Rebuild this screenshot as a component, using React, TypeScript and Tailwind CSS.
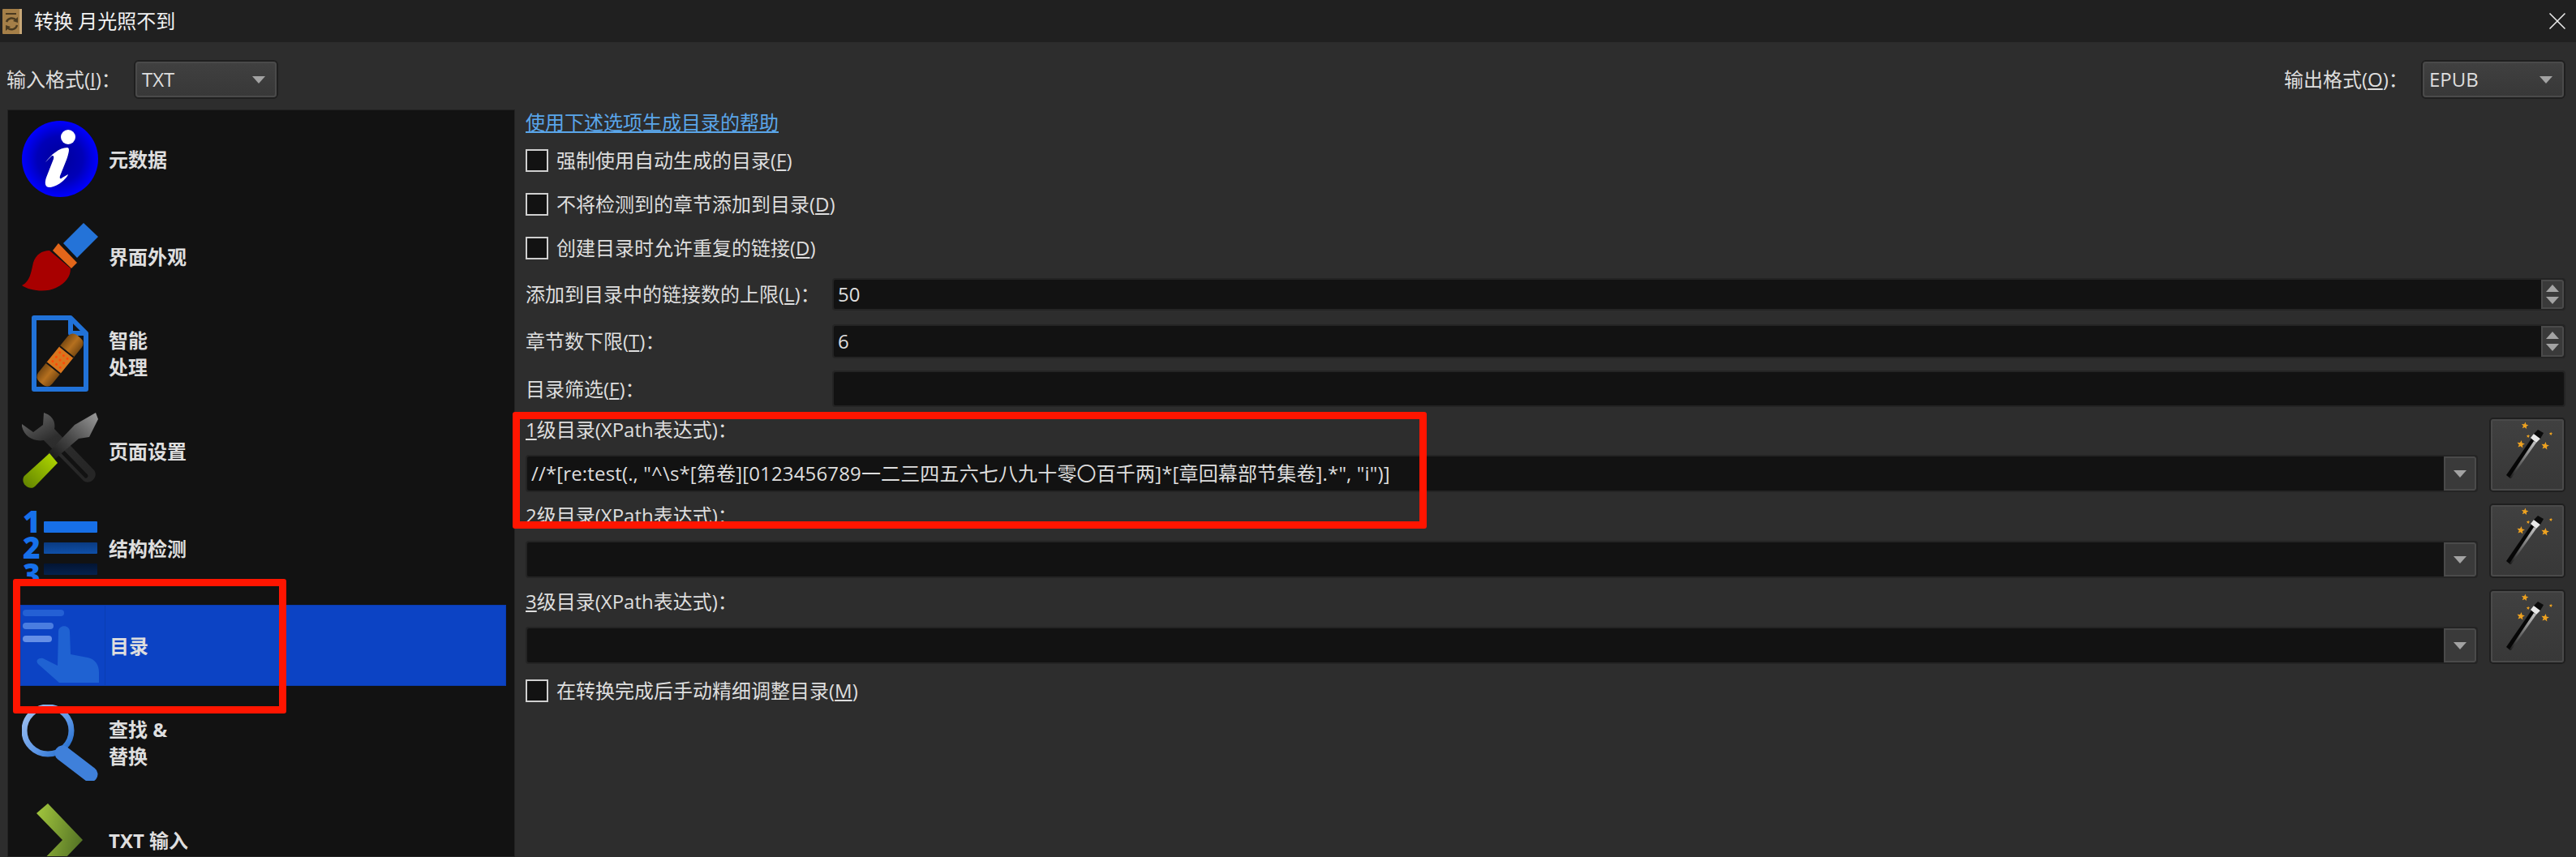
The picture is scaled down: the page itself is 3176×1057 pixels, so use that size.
import React from 'react';

const Arrow = ({ up = false }: { up?: boolean }) => (
  <svg width="16" height="9" viewBox="0 0 16 9">
    <polygon points={up ? '8,0 16,9 0,9' : '0,0 16,0 8,9'} fill="#a3a3a3" />
  </svg>
);

const Combo = ({ text, className }: { text: string; className: string }) => (
  <div className={`rounded-[6px] border-2 border-[#1f1f1f] ${className}`}>
    <div className="flex h-full items-center justify-between rounded-[4px] border-2 border-[#4a4a4a] bg-gradient-to-b from-[#404040] to-[#383838] pl-[6px] pr-[12px]">
      <span>{text}</span>
      <Arrow />
    </div>
  </div>
);

const Check = ({ children, className = '' }: { children: React.ReactNode; className?: string }) => (
  <div className={`flex h-[28px] items-center gap-[10px] ${className}`}>
    <div className="h-[28px] w-[28px] border-2 border-[#cfcfcf] bg-[#121212]" />
    <span>{children}</span>
  </div>
);

const SpinRow = ({ label, value, spin = false, className }: { label: React.ReactNode; value?: string; spin?: boolean; className: string }) => (
  <div className={`flex items-center ${className}`}>
    <div className="w-[378px]">{label}</div>
    <div className="flex h-full flex-1 rounded-[4px] border-2 border-[#242424] bg-[#121212]">
      <div className="flex flex-1 items-center pl-[5px]">{value}</div>
      {spin && (
        <div className="flex w-[28px] flex-col items-center justify-center gap-[6px] rounded-r-[3px] border-2 border-[#4a4a4a] bg-[#3a3a3a]">
          <Arrow up />
          <Arrow />
        </div>
      )}
    </div>
  </div>
);

const star = (cx: number, cy: number, r: number) =>
  Array.from({ length: 10 }, (_, i) => {
    const a = (Math.PI / 5) * i - Math.PI / 2 + 0.15;
    const d = i % 2 ? r * 0.45 : r;
    return `${(cx + d * Math.cos(a)).toFixed(1)},${(cy + d * Math.sin(a)).toFixed(1)}`;
  }).join(' ');

const Wand = () => (
  <svg width="86" height="84" viewBox="13 9 86 84">
    <defs>
      <linearGradient id="wandShine" x1="0" y1="1" x2="1" y2="0">
        <stop offset="0" stopColor="#1a1a1a" />
        <stop offset="0.45" stopColor="#6a6a6a" />
        <stop offset="1" stopColor="#c8c8c8" />
      </linearGradient>
    </defs>
    {[[53, 15, 4.5], [57, 28, 2.2], [85, 25, 2.2], [48, 38, 5], [78, 40, 5]].map(([x, y, r]) => (
      <polygon key={`${x}-${y}`} points={star(x, y, r)} fill="#eea220" />
    ))}
    <polygon points="30,76 35,80 66,35 61,31" fill="#060606" />
    <polygon points="34,79 36,80 67,36 64,34" fill="url(#wandShine)" />
    <polygon points="64,25 72,31 67,36 60,30" fill="#e8e8e8" />
    <polygon points="69,20 76,24 72,31 64,25" fill="#0a0a0a" />
  </svg>
);

const LevelRow = ({ n, value, className = '' }: { n: string; value?: string; className?: string }) => (
  <div className={`flex h-[92px] gap-[14px] ${className}`}>
    <div className="flex flex-1 flex-col justify-between">
      <div className="h-[30px] leading-[30px]">
        <span className="underline">{n}</span>级目录(XPath表达式)：
      </div>
      <div className="flex h-[46px] rounded-[4px] border-2 border-[#242424] bg-[#121212]">
        <div className="flex flex-1 items-center whitespace-pre pl-[5px] tracking-[0.15px]">{value}</div>
        <div className="flex w-[40px] items-center justify-center rounded-r-[3px] border-2 border-[#4a4a4a] bg-[#3a3a3a]">
          <Arrow />
        </div>
      </div>
    </div>
    <div className="h-[92px] w-[94px] rounded-[5px] border-2 border-[#1f1f1f]">
      <div className="flex h-full items-center justify-center rounded-[3px] border-2 border-[#4a4a4a] bg-gradient-to-b from-[#404040] to-[#383838]">
        <Wand />
      </div>
    </div>
  </div>
);

const InfoIcon = () => (
  <svg width="94" height="94" viewBox="0 0 94 94">
    <defs>
      <radialGradient id="infoBg">
        <stop offset="0" stopColor="#00009a" />
        <stop offset="0.6" stopColor="#0000b8" />
        <stop offset="1" stopColor="#0000ff" />
      </radialGradient>
    </defs>
    <circle cx="47" cy="47" r="47" fill="url(#infoBg)" />
    <circle cx="57" cy="20" r="9" fill="#fff" />
    <path d="M29 51 C36 42 46 33 56 33 C60 33 57 42 55 48 L47 68 C46 72 48 72 50 70 L57 66 C55 72 43 82 34 82 C28 82 28 76 30 70 L39 47 C40 43 38 42 36 44 Z" fill="#fff" />
  </svg>
);

const BrushIcon = () => (
  <svg width="94" height="94" viewBox="0 0 94 94">
    <polygon points="76,6 94,23 68,49 51,31" fill="#2473d8" />
    <polygon points="45,31 68,55 61,62 38,40" fill="#e2661a" />
    <path d="M34 40 C25 40 17 45 14 55 C11 68 10 78 0 83 C10 90 30 92 42 86 C54 80 60 72 60 62 Z" fill="#a80000" />
  </svg>
);

const DocIcon = () => (
  <svg width="94" height="94" viewBox="0 0 94 94">
    <defs>
      <linearGradient id="bandEnd" x1="0" y1="0" x2="0" y2="1">
        <stop offset="0" stopColor="#7a4a12" />
        <stop offset="0.5" stopColor="#b5701f" />
        <stop offset="1" stopColor="#7a4a12" />
      </linearGradient>
    </defs>
    <path d="M15 3 H60 L79 22 V91 H15 Z" fill="none" stroke="#2172d8" strokeWidth="6" strokeLinejoin="round" />
    <path d="M60 3 V22 H79" fill="none" stroke="#2172d8" strokeWidth="6" strokeLinejoin="round" />
    <g transform="rotate(-51 47 55)">
      <rect x="10" y="44" width="74" height="22" rx="8" fill="url(#bandEnd)" />
      <rect x="34" y="44" width="26" height="22" fill="#d9761e" />
      <line x1="34" y1="44" x2="34" y2="66" stroke="#111" strokeWidth="2" />
      <line x1="60" y1="44" x2="60" y2="66" stroke="#111" strokeWidth="2" />
      {[40, 47, 54].flatMap((x) => [49, 55, 61].map((y) => <circle key={`${x}-${y}`} cx={x} cy={y} r="1.5" fill="#ff4a08" />))}
    </g>
  </svg>
);

const ToolsIcon = () => (
  <svg width="94" height="94" viewBox="0 0 94 94">
    <defs>
      <linearGradient id="steel" x1="0" y1="0" x2="0.6" y2="1">
        <stop offset="0" stopColor="#6e6e6e" />
        <stop offset="0.45" stopColor="#2e2e2e" />
        <stop offset="1" stopColor="#262626" />
      </linearGradient>
      <linearGradient id="blade" x1="1" y1="0" x2="0" y2="1">
        <stop offset="0" stopColor="#9c9c9c" />
        <stop offset="0.5" stopColor="#4a4a4a" />
        <stop offset="1" stopColor="#0a0a0a" />
      </linearGradient>
      <linearGradient id="lime" x1="1" y1="0" x2="0" y2="1">
        <stop offset="0" stopColor="#b4dc00" />
        <stop offset="1" stopColor="#5f8000" />
      </linearGradient>
    </defs>
    <path d="M27 0 C37 3 42 11 40 20 L89 71 C95 79 84 90 76 84 L27 34 C15 36 3 30 0 17 L0 14 L14 24 L26 15 Z" fill="url(#steel)" />
    <path d="M48 46 L79 78" stroke="#121212" strokeWidth="5" strokeLinecap="round" />
    <polygon points="65,15 91,0 94,8 83,30 70,32 35,62 28,54" fill="url(#blade)" />
    <path d="M34 50 L44 62 L16 91 C9 97 -3 87 3 78 Z" fill="url(#lime)" />
  </svg>
);

const StructIcon = () => (
  <svg width="94" height="94" viewBox="0 0 94 94" fontFamily="'Open Sans', sans-serif" fontWeight="800" fontSize="37" fill="#1670ea">
    <defs>
      <linearGradient id="bar2" x1="0" y1="0" x2="0" y2="1">
        <stop offset="0" stopColor="#0a3a80" />
        <stop offset="1" stopColor="#0f4fa8" />
      </linearGradient>
      <linearGradient id="bar3" x1="0" y1="0" x2="0" y2="1">
        <stop offset="0" stopColor="#031432" />
        <stop offset="1" stopColor="#05224e" />
      </linearGradient>
    </defs>
    <text x="1" y="28">1</text>
    <text x="1" y="60">2</text>
    <text x="1" y="93">3</text>
    <rect x="27" y="14" width="66" height="14" rx="1" fill="#176fe6" />
    <rect x="27" y="40" width="66" height="14" rx="1" fill="url(#bar2)" />
    <rect x="27" y="66" width="66" height="14" rx="1" fill="url(#bar3)" />
  </svg>
);

const HandIcon = () => (
  <svg width="94" height="91" viewBox="0 0 94 91">
    <rect x="0" y="1" width="51" height="8" rx="4" fill="#2460d4" />
    <rect x="0" y="17" width="38" height="8" rx="4" fill="#4a7de0" />
    <rect x="0" y="33" width="36" height="8" rx="4" fill="#658fe6" />
    <path d="M44 28 C44 19 58 19 58 28 L59 56 L80 60 C90 62 94 70 94 78 V91 H45 L19 68 C15 63 20 60 25 61 L43 70 Z" fill="#1f62d2" />
  </svg>
);

const SearchIcon = () => (
  <svg width="94" height="94" viewBox="0 0 94 94">
    <defs>
      <linearGradient id="lens" x1="0" y1="0" x2="1" y2="1">
        <stop offset="0" stopColor="#a4c4f2" />
        <stop offset="0.6" stopColor="#5c96e6" />
        <stop offset="1" stopColor="#1a66c8" />
      </linearGradient>
    </defs>
    <circle cx="32" cy="32" r="29" fill="none" stroke="url(#lens)" strokeWidth="7" />
    <path d="M50 60 L84 86" stroke="#3f80da" strokeWidth="19" strokeLinecap="round" />
  </svg>
);

const ChevronIcon = () => (
  <svg width="94" height="94" viewBox="0 0 94 94">
    <defs>
      <linearGradient id="chev" x1="0" y1="0" x2="1" y2="0.4">
        <stop offset="0" stopColor="#a4c83e" />
        <stop offset="1" stopColor="#577626" />
      </linearGradient>
    </defs>
    <path d="M32 2 L75 47 L32 92 L18 80 L50 47 L18 14 Z" fill="url(#chev)" />
  </svg>
);

const NAV = [
  { label: ['元数据'], icon: <InfoIcon /> },
  { label: ['界面外观'], icon: <BrushIcon /> },
  { label: ['智能', '处理'], icon: <DocIcon /> },
  { label: ['页面设置'], icon: <ToolsIcon /> },
  { label: ['结构检测'], icon: <StructIcon /> },
  { label: ['目录'], icon: <HandIcon />, active: true },
  { label: ['查找 &', '替换'], icon: <SearchIcon /> },
  { label: ['TXT 输入'], icon: <ChevronIcon /> },
];

export default function App() {
  return (
    <div className="relative flex h-[1057px] w-[3176px] flex-col overflow-hidden bg-[#2d2d2d] font-['Open_Sans','Noto_Sans_CJK_SC',sans-serif] text-[24px] text-[#dedede]">
      <div className="flex h-[52px] items-center bg-[#202020]">
        <svg className="ml-[3px]" width="24" height="31" viewBox="0 0 24 31">
          <rect width="24" height="31" rx="1" fill="#a57f48" />
          <rect x="21" width="3" height="31" fill="#c8a878" />
          <rect x="4" y="5" width="13" height="2" fill="#4a3a20" />
          <path d="M5 16 A7 7 0 0 1 17 14 M18 20 A7 7 0 0 1 6 23" fill="none" stroke="#4a3a20" strokeWidth="2.5" />
          <polygon points="19,10 19,17 13,15" fill="#4a3a20" />
          <polygon points="4,27 4,20 10,22" fill="#4a3a20" />
        </svg>
        <span className="ml-[15px] flex-1 text-[#f2f2f2]">转换 月光照不到</span>
        <svg className="mr-[13px]" width="20" height="20" viewBox="0 0 20 20">
          <path d="M0.5 0.5 L19.5 19.5 M19.5 0.5 L0.5 19.5" stroke="#eee" strokeWidth="1.5" />
        </svg>
      </div>

      <div className="flex h-[83px] items-start justify-between pl-[8px] pr-[13px] pt-[22px]">
        <div className="flex items-center">
          <span className="w-[157px]">
            输入格式(<span className="underline">I</span>)：
          </span>
          <Combo text="TXT" className="h-[48px] w-[178px]" />
        </div>
        <div className="flex items-center">
          <span className="w-[169px]">
            输出格式(<span className="underline">O</span>)：
          </span>
          <Combo text="EPUB" className="h-[48px] w-[178px]" />
        </div>
      </div>

      <div className="flex min-h-0 flex-1 pl-[9px] pr-[13px]">
        <div className="w-[626px] shrink-0 overflow-hidden border border-[#232323] bg-[#121212] pb-0">
          {NAV.map((item) => (
            <div key={item.label[0]} className="flex h-[120px] py-[10px] pl-[15px] pr-[10px]">
              <div className={`flex h-[100px] flex-1 items-center font-bold ${item.active ? 'border border-[#0a3db2] bg-[#0c43c4]' : ''}`}>
                <div className={`flex h-full w-[104px] items-center pl-[2px] ${item.active ? 'border-r border-[#0a3db2]' : ''}`}>{item.icon}</div>
                <div className="ml-[5px] leading-[33px]">
                  {item.label.map((line) => (
                    <div key={line}>{line}</div>
                  ))}
                </div>
              </div>
            </div>
          ))}
        </div>

        <div className="ml-[13px] flex-1">
          <div className="mt-[1px] h-[30px] leading-[30px] text-[#5aa6ea] underline">使用下述选项生成目录的帮助</div>
          <Check className="mt-[18px]">
            强制使用自动生成的目录(<span className="underline">F</span>)
          </Check>
          <Check className="mt-[26px]">
            不将检测到的章节添加到目录(<span className="underline">D</span>)
          </Check>
          <Check className="mt-[26px]">
            创建目录时允许重复的链接(<span className="underline">D</span>)
          </Check>
          <SpinRow
            className="mt-[23px] h-[40px]"
            value="50"
            spin
            label={<>添加到目录中的链接数的上限(<span className="underline">L</span>)：</>}
          />
          <SpinRow
            className="mt-[17px] h-[42px]"
            value="6"
            spin
            label={<>章节数下限(<span className="underline">T</span>)：</>}
          />
          <SpinRow
            className="mt-[15px] h-[45px]"
            label={<>目录筛选(<span className="underline">F</span>)：</>}
          />
          <LevelRow className="mt-[13px]" n="1" value={'//*[re:test(., "^\\s*[第卷][0123456789一二三四五六七八九十零〇百千两]*[章回幕部节集卷].*", "i")]'} />
          <LevelRow className="mt-[14px]" n="2" />
          <LevelRow className="mt-[14px]" n="3" />
          <Check className="mt-[19px]">
            在转换完成后手动精细调整目录(<span className="underline">M</span>)
          </Check>
        </div>
      </div>

      <div className="absolute left-[16px] top-[714px] h-[166px] w-[337px] rounded-[3px] border-[9px] border-[#ff1500]" />
      <div className="absolute left-[632px] top-[508px] h-[144px] w-[1127px] rounded-[3px] border-[9px] border-[#ff1500]" />
    </div>
  );
}
